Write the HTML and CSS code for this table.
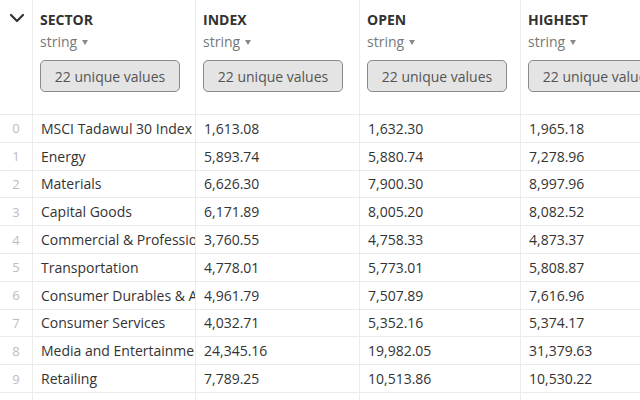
FILE: index.html
```html
<!DOCTYPE html>
<html>
<head>
<meta charset="utf-8">
<link rel="stylesheet" href="styles.css">
</head>
<body>
<div class="grid">
  <div class="hcell corner">
    <svg class="chev" width="16" height="10" viewBox="0 0 16 10"><polyline points="2,2 8,8 14,2" fill="none" stroke="#333" stroke-width="2.2" stroke-linecap="round" stroke-linejoin="round"/></svg>
  </div>
  <div class="hcell"><div class="name">SECTOR</div><div class="type">string <span class="tri"></span></div><div class="btn">22 unique values</div></div>
  <div class="hcell"><div class="name">INDEX</div><div class="type">string <span class="tri"></span></div><div class="btn">22 unique values</div></div>
  <div class="hcell"><div class="name">OPEN</div><div class="type">string <span class="tri"></span></div><div class="btn">22 unique values</div></div>
  <div class="hcell"><div class="name">HIGHEST</div><div class="type">string <span class="tri"></span></div><div class="btn">22 unique values</div></div>

  <div class="idx">0</div><div class="cell">MSCI Tadawul 30 Index</div><div class="cell">1,613.08</div><div class="cell">1,632.30</div><div class="cell">1,965.18</div>
  <div class="idx">1</div><div class="cell">Energy</div><div class="cell">5,893.74</div><div class="cell">5,880.74</div><div class="cell">7,278.96</div>
  <div class="idx">2</div><div class="cell">Materials</div><div class="cell">6,626.30</div><div class="cell">7,900.30</div><div class="cell">8,997.96</div>
  <div class="idx">3</div><div class="cell">Capital Goods</div><div class="cell">6,171.89</div><div class="cell">8,005.20</div><div class="cell">8,082.52</div>
  <div class="idx">4</div><div class="cell">Commercial &amp; Professional Svc</div><div class="cell">3,760.55</div><div class="cell">4,758.33</div><div class="cell">4,873.37</div>
  <div class="idx">5</div><div class="cell">Transportation</div><div class="cell">4,778.01</div><div class="cell">5,773.01</div><div class="cell">5,808.87</div>
  <div class="idx">6</div><div class="cell">Consumer Durables &amp; Apparel</div><div class="cell">4,961.79</div><div class="cell">7,507.89</div><div class="cell">7,616.96</div>
  <div class="idx">7</div><div class="cell">Consumer Services</div><div class="cell">4,032.71</div><div class="cell">5,352.16</div><div class="cell">5,374.17</div>
  <div class="idx">8</div><div class="cell">Media and Entertainment</div><div class="cell">24,345.16</div><div class="cell">19,982.05</div><div class="cell">31,379.63</div>
  <div class="idx">9</div><div class="cell">Retailing</div><div class="cell">7,789.25</div><div class="cell">10,513.86</div><div class="cell">10,530.22</div>
  <div class="idx"></div><div class="cell"></div><div class="cell"></div><div class="cell"></div><div class="cell"></div>
</div>
</body>
</html>
```
FILE: styles.css
```css
html, body {
  margin: 0;
  padding: 0;
  background: #fff;
  overflow: hidden;
}
body {
  font-family: "Open Sans", "Noto Sans", sans-serif;
  font-size: 14px;
  color: #333;
}
.grid {
  display: grid;
  grid-template-columns: 33px 163px 164px 161px 163px;
  grid-template-rows: 115px repeat(11, 27.8px);
  width: max-content;
}
.grid > div {
  box-sizing: border-box;
  border-right: 1px solid #ebebeb;
  border-bottom: 1px solid #ebebeb;
  overflow: hidden;
  white-space: nowrap;
}
.hcell {
  padding: 10px 0 0 7px;
}
.corner {
  padding: 0;
  display: flex;
  justify-content: center;
}
.chev {
  margin-top: 13px;
  margin-left: 1px;
}
.name {
  font-weight: 700;
  font-size: 14px;
  line-height: 20px;
  color: #333;
}
.type {
  color: #777;
  font-size: 14px;
  line-height: 20px;
  margin-top: 2px;
}
.tri {
  display: inline-block;
  width: 0;
  height: 0;
  border-left: 3.5px solid transparent;
  border-right: 3.5px solid transparent;
  border-top: 5px solid #888;
  vertical-align: 2px;
  margin-left: 1px;
}
.btn {
  box-sizing: border-box;
  margin-top: 8px;
  width: 140px;
  height: 32px;
  border: 1px solid #8a8a8a;
  border-radius: 5px;
  background: #e4e4e4;
  color: #555;
  font-size: 14px;
  display: flex;
  align-items: center;
  justify-content: center;
}
.idx {
  color: #bdbdbd;
  display: flex;
  align-items: center;
  justify-content: center;
  font-size: 13px;
}
.cell {
  padding-left: 8px;
  display: flex;
  align-items: center;
  color: #333;
}
```
